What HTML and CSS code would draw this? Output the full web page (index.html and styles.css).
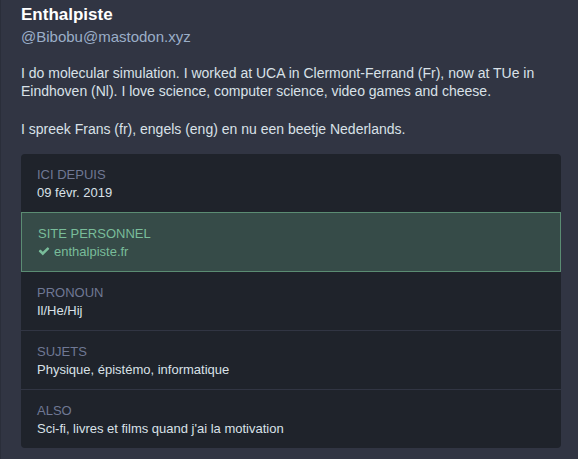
FILE: index.html
```html
<!DOCTYPE html>
<html>
<head>
<meta charset="utf-8">
<link rel="stylesheet" href="styles.css">
</head>
<body>
<div class="page">
  <div class="name">Enthalpiste</div>
  <div class="handle">@Bibobu@mastodon.xyz</div>
  <div class="bio">
    <p>I do molecular simulation. I worked at UCA in Clermont-Ferrand (Fr), now at TUe in Eindhoven (Nl). I love science, computer science, video games and cheese.</p>
    <p>I spreek Frans (fr), engels (eng) en nu een beetje Nederlands.</p>
  </div>
  <dl class="fields">
    <div class="field">
      <dt>ICI DEPUIS</dt>
      <dd>09 févr. 2019</dd>
    </div>
    <div class="field verified">
      <dt>SITE PERSONNEL</dt>
      <dd><svg class="check" viewBox="0 0 1792 1792" width="12" height="12"><path fill="currentColor" d="M1671 566q0 40-28 68l-724 724-136 136q-28 28-68 28t-68-28l-136-136-362-362q-28-28-28-68t28-68l136-136q28-28 68-28t68 28l294 295 656-657q28-28 68-28t68 28l136 136q28 28 28 68z"/></svg>enthalpiste.fr</dd>
    </div>
    <div class="field">
      <dt>PRONOUN</dt>
      <dd>Il/He/Hij</dd>
    </div>
    <div class="field">
      <dt>SUJETS</dt>
      <dd>Physique, épistémo, informatique</dd>
    </div>
    <div class="field">
      <dt>ALSO</dt>
      <dd>Sci-fi, livres et films quand j'ai la motivation</dd>
    </div>
  </dl>
</div>
</body>
</html>
```
FILE: styles.css
```css
html, body {
  margin: 0;
  padding: 0;
  background: #313543;
  height: 100%;
}
body {
  font-family: "Liberation Sans", Arial, sans-serif;
  color: #d9e1e8;
  border-left: 1px solid #2a2e3a;
  box-sizing: border-box;
}
.page {
  padding: 4px 17px 0 20px;
}
.name {
  font-size: 17px;
  font-weight: bold;
  color: #ffffff;
  line-height: 22px;
}
.handle {
  font-size: 15px;
  color: #9baec8;
  line-height: 20px;
  margin-top: 1px;
}
.bio {
  margin-top: 17px;
  font-size: 14px;
  line-height: 18px;
  color: #d9e1e8;
}
.bio p {
  margin: 0 0 20px 0;
}
.bio p:last-child {
  margin-bottom: 0;
}
.fields {
  margin: 16px 0 0 0;
  background: #1f232b;
  border-radius: 4px;
  overflow: hidden;
}
.field {
  padding: 12px 16px 10px;
  border-bottom: 1px solid #313543;
  font-size: 13px;
  line-height: 18px;
}
.field:last-child {
  border-bottom: none;
}
.field dt {
  color: #6f7894;
}
.field dd {
  margin: 0;
  color: #d9e1e8;
}
.field.verified {
  background: #364b48;
  border: 1px solid #5b8c73;
  margin-top: -1px;
  padding: 12px 16px 10px;
}
.field.verified dt,
.field.verified dd {
  color: #79bd9a;
}
.check {
  vertical-align: -1px;
  margin-right: 4px;
}
```
